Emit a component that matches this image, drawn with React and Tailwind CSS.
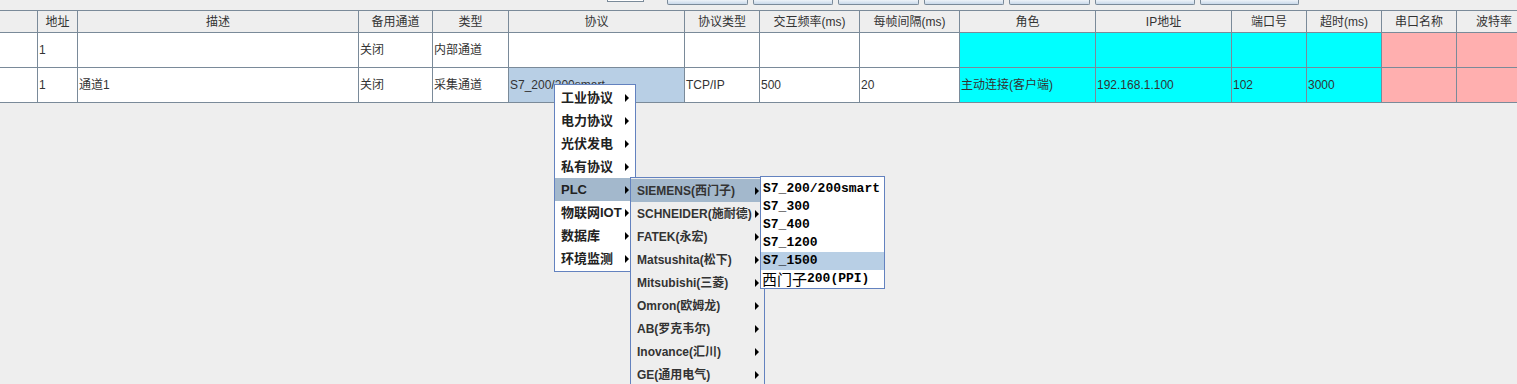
import React from 'react'

const sans = "font-['Liberation_Sans','Noto_Sans_CJK_SC',sans-serif]"

const cols = [
  { w: 'w-[38px]', h: '' },
  { w: 'w-[40px]', h: '地址' },
  { w: 'w-[281px]', h: '描述' },
  { w: 'w-[74px]', h: '备用通道' },
  { w: 'w-[76px]', h: '类型' },
  { w: 'w-[176px]', h: '协议' },
  { w: 'w-[75px]', h: '协议类型' },
  { w: 'w-[100px]', h: '交互频率(ms)' },
  { w: 'w-[100px]', h: '每帧间隔(ms)' },
  { w: 'w-[136px]', h: '角色' },
  { w: 'w-[136px]', h: 'IP地址' },
  { w: 'w-[75px]', h: '端口号' },
  { w: 'w-[75px]', h: '超时(ms)' },
  { w: 'w-[75px]', h: '串口名称' },
  { w: 'w-[75px]', h: '波特率' },
]

const rows = [
  ['', '1', '', '关闭', '内部通道', '', '', '', '', '', '', '', '', '', ''],
  ['', '1', '通道1', '关闭', '采集通道', 'S7_200/200smart', 'TCP/IP', '500', '20', '主动连接(客户端)', '192.168.1.100', '102', '3000', '', ''],
]

const cellBg = (r, i) => {
  if (i >= 9 && i <= 12) return 'bg-[#00ffff]'
  if (i >= 13) return 'bg-[#ffafaf]'
  if (r === 1 && i === 5) return 'bg-[#b8cfe5]'
  return 'bg-white'
}

const menu1 = ['工业协议', '电力协议', '光伏发电', '私有协议', 'PLC', '物联网IOT', '数据库', '环境监测']
const menu2 = ['SIEMENS(西门子)', 'SCHNEIDER(施耐德)', 'FATEK(永宏)', 'Matsushita(松下)', 'Mitsubishi(三菱)', 'Omron(欧姆龙)', 'AB(罗克韦尔)', 'Inovance(汇川)', 'GE(通用电气)']
const menu3 = ['S7_200/200smart', 'S7_300', 'S7_400', 'S7_1200', 'S7_1500']

function Arrow() {
  return <span className="w-0 h-0 border-y-[4px] border-y-transparent border-l-[4px] border-l-black" />
}

function TopButton({ w }) {
  return (
    <div className={`${w} h-[5px] border border-t-0 border-[#7a8a99] rounded-b-[2px] bg-gradient-to-b from-[#eef3f8] to-[#c9d9ea]`} />
  )
}

export default function App() {
  return (
    <div className={`relative w-[1517px] h-[384px] overflow-hidden bg-[#eeeeee] ${sans}`}>
      {/* toolbar strip, mostly scrolled off */}
      <div className="h-[10px] flex items-start">
        <div className="ml-[607px] w-[37px] h-[2px] bg-white border-b border-x border-[#7a8a99]" />
        <div className="ml-[23px] flex gap-[5px]">
          <TopButton w="w-[81px]" />
          <TopButton w="w-[80px]" />
          <TopButton w="w-[81px]" />
          <TopButton w="w-[80px]" />
          <TopButton w="w-[81px]" />
          <TopButton w="w-[100px]" />
          <TopButton w="w-[99px]" />
        </div>
      </div>

      {/* table */}
      <div className="flex flex-col w-[1600px] text-[12px] text-[#333333]">
        <div className="flex border-y border-[#7a8a99] bg-[#eeeeee] h-[23px]">
          {cols.map((c, i) => (
            <div key={i} className={`${c.w} shrink-0 border-r border-[#7a8a99] flex items-center justify-center`}>
              {c.h}
            </div>
          ))}
        </div>
        {rows.map((row, r) => (
          <div key={r} className="flex border-b border-[#7a8a99] h-[35px]">
            {cols.map((c, i) => (
              <div key={i} className={`${c.w} shrink-0 border-r border-[#7a8a99] ${cellBg(r, i)} flex items-center pl-[1px] whitespace-nowrap overflow-hidden`}>
                {row[i]}
              </div>
            ))}
          </div>
        ))}
      </div>

      {/* popup menu level 1 */}
      <div className="absolute left-[554px] top-[84px] w-[82px] bg-white border border-[#6382bf] py-[1px]">
        {menu1.map((m) => (
          <div key={m} className={`h-[23px] flex items-center justify-between pl-[6px] pr-[6px] text-[13px] font-bold text-[#222222] ${m === 'PLC' ? 'bg-[#a3b8cc]' : ''}`}>
            <span>{m}</span>
            <Arrow />
          </div>
        ))}
      </div>

      {/* popup menu level 2 */}
      <div className="absolute left-[630px] top-[177px] w-[135px] bg-[#eeeeee] border border-[#6382bf] pt-[1px]">
        {menu2.map((m, i) => (
          <div key={m} className={`h-[23px] flex items-center justify-between pl-[6px] pr-[5px] text-[12px] font-bold text-[#333333] whitespace-nowrap ${i === 0 ? 'bg-[#a3b8cc]' : ''}`}>
            <span>{m}</span>
            <Arrow />
          </div>
        ))}
      </div>

      {/* popup menu level 3 */}
      <div className="absolute left-[760px] top-[176px] w-[125px] bg-white border border-[#6382bf] pt-[3px] text-black font-bold">
        {menu3.map((m) => (
          <div key={m} className={`h-[18px] flex items-center pl-[2px] text-[13px] font-['Liberation_Mono',monospace] whitespace-nowrap ${m === 'S7_1500' ? 'bg-[#b8cfe5]' : ''}`}>
            {m}
          </div>
        ))}
        <div className="h-[18px] flex items-center pl-[1px] whitespace-nowrap">
          <span className="text-[15px] font-['Noto_Sans_CJK_SC',sans-serif] font-normal">西门子</span>
          <span className="text-[13px] font-['Liberation_Mono',monospace]">200(PPI)</span>
        </div>
      </div>
    </div>
  )
}
